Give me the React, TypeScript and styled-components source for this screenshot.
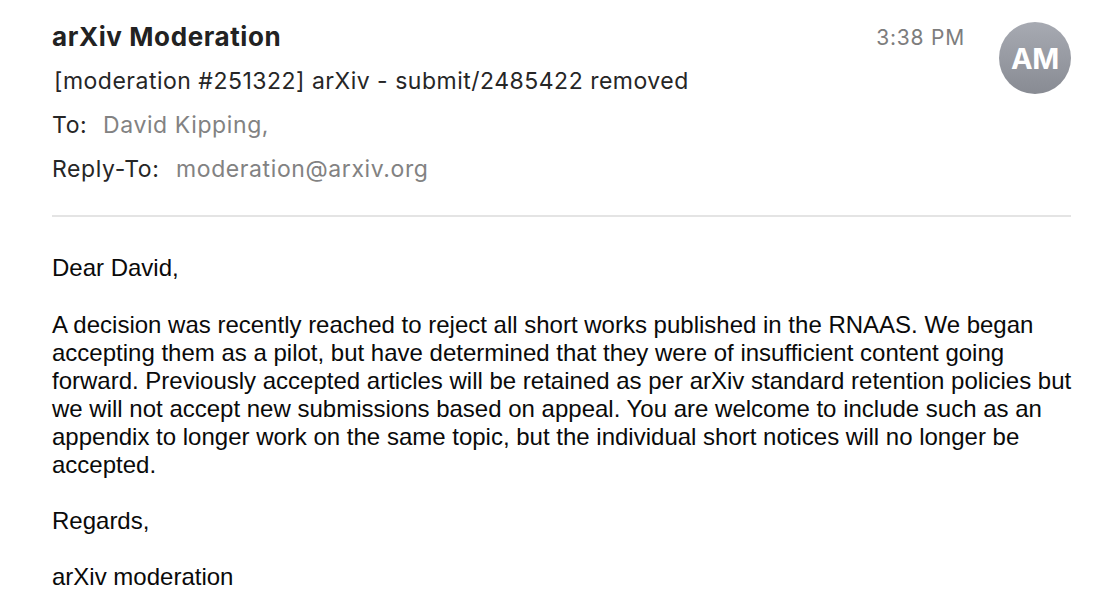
import React from "react";
import styled, { createGlobalStyle } from "styled-components";

const Global = createGlobalStyle`
  html, body { margin: 0; padding: 0; background: #ffffff; }
  body { width: 1103px; height: 601px; overflow: hidden; }
`;

const Page = styled.div`
  box-sizing: border-box;
  width: 1103px;
  height: 601px;
  padding: 18px 32px 0 52px;
  background: #fff;
  display: flex;
  flex-direction: column;
`;

const Header = styled.header`
  display: flex;
  align-items: flex-start;
  justify-content: space-between;
`;

const Meta = styled.div`
  display: flex;
  flex-direction: column;
  font-family: Inter, "Noto Sans", sans-serif;
`;

const Sender = styled.div`
  font-size: 26px;
  font-weight: 700;
  color: #222;
  line-height: 38px;
  letter-spacing: 0.6px;
`;

const Subject = styled.div`
  font-size: 23px;
  color: #262626;
  line-height: 30px;
  margin-top: 10px;
  padding-left: 2px;
  letter-spacing: 0.5px;
`;

const Field = styled.div`
  display: flex;
  font-size: 23px;
  line-height: 30px;
  margin-top: 14px;
  letter-spacing: 0.6px;
`;

const FieldLabel = styled.span<{ $w: number }>`
  color: #262626;
  width: ${(p) => p.$w}px;
  flex: none;
`;

const FieldValue = styled.span`
  color: #828282;
`;

const Side = styled.div`
  display: flex;
  align-items: flex-start;
  gap: 34px;
`;

const Time = styled.div`
  font-family: Inter, "Noto Sans", sans-serif;
  font-size: 21px;
  color: #7d7d7d;
  line-height: 28px;
  margin-top: 6px;
  letter-spacing: 0.8px;
`;

const Avatar = styled.div`
  width: 72px;
  height: 72px;
  border-radius: 50%;
  margin-top: 4px;
  background: linear-gradient(180deg, #a7aab2 0%, #888b93 100%);
  color: #fff;
  display: flex;
  align-items: center;
  justify-content: center;
  font-family: Inter, "Noto Sans", sans-serif;
  font-weight: 700;
  font-size: 29px;
  letter-spacing: -0.3px;
`;

const Divider = styled.div`
  height: 2px;
  background: #e4e4e4;
  margin-top: 31px;
  flex: none;
`;

const Body = styled.div`
  font-family: "Liberation Sans", Arial, sans-serif;
  font-size: 24px;
  line-height: 28px;
  color: #0a0a0a;
  margin-top: 37px;
  margin-right: -10px;
`;

const Para = styled.p`
  margin: 0 0 28px 0;
`;

const FirstPara = styled(Para)`
  margin-bottom: 29px;
`;

export default function App() {
  return (
    <>
      <Global />
      <Page>
        <Header>
          <Meta>
            <Sender>arXiv Moderation</Sender>
            <Subject>[moderation #251322] arXiv - submit/2485422 removed</Subject>
            <Field>
              <FieldLabel $w={51}>To:</FieldLabel>
              <FieldValue>David Kipping,</FieldValue>
            </Field>
            <Field>
              <FieldLabel $w={124}>Reply-To:</FieldLabel>
              <FieldValue>moderation@arxiv.org</FieldValue>
            </Field>
          </Meta>
          <Side>
            <Time>3:38 PM</Time>
            <Avatar>AM</Avatar>
          </Side>
        </Header>
        <Divider />
        <Body>
          <FirstPara>Dear David,</FirstPara>
          <Para>
            A decision was recently reached to reject all short works published in the RNAAS. We began
            accepting them as a pilot, but have determined that they were of insufficient content going
            forward. Previously accepted articles will be retained as per arXiv standard retention policies but
            we will not accept new submissions based on appeal. You are welcome to include such as an
            appendix to longer work on the same topic, but the individual short notices will no longer be
            accepted.
          </Para>
          <Para>Regards,</Para>
          <Para>arXiv moderation</Para>
        </Body>
      </Page>
    </>
  );
}
